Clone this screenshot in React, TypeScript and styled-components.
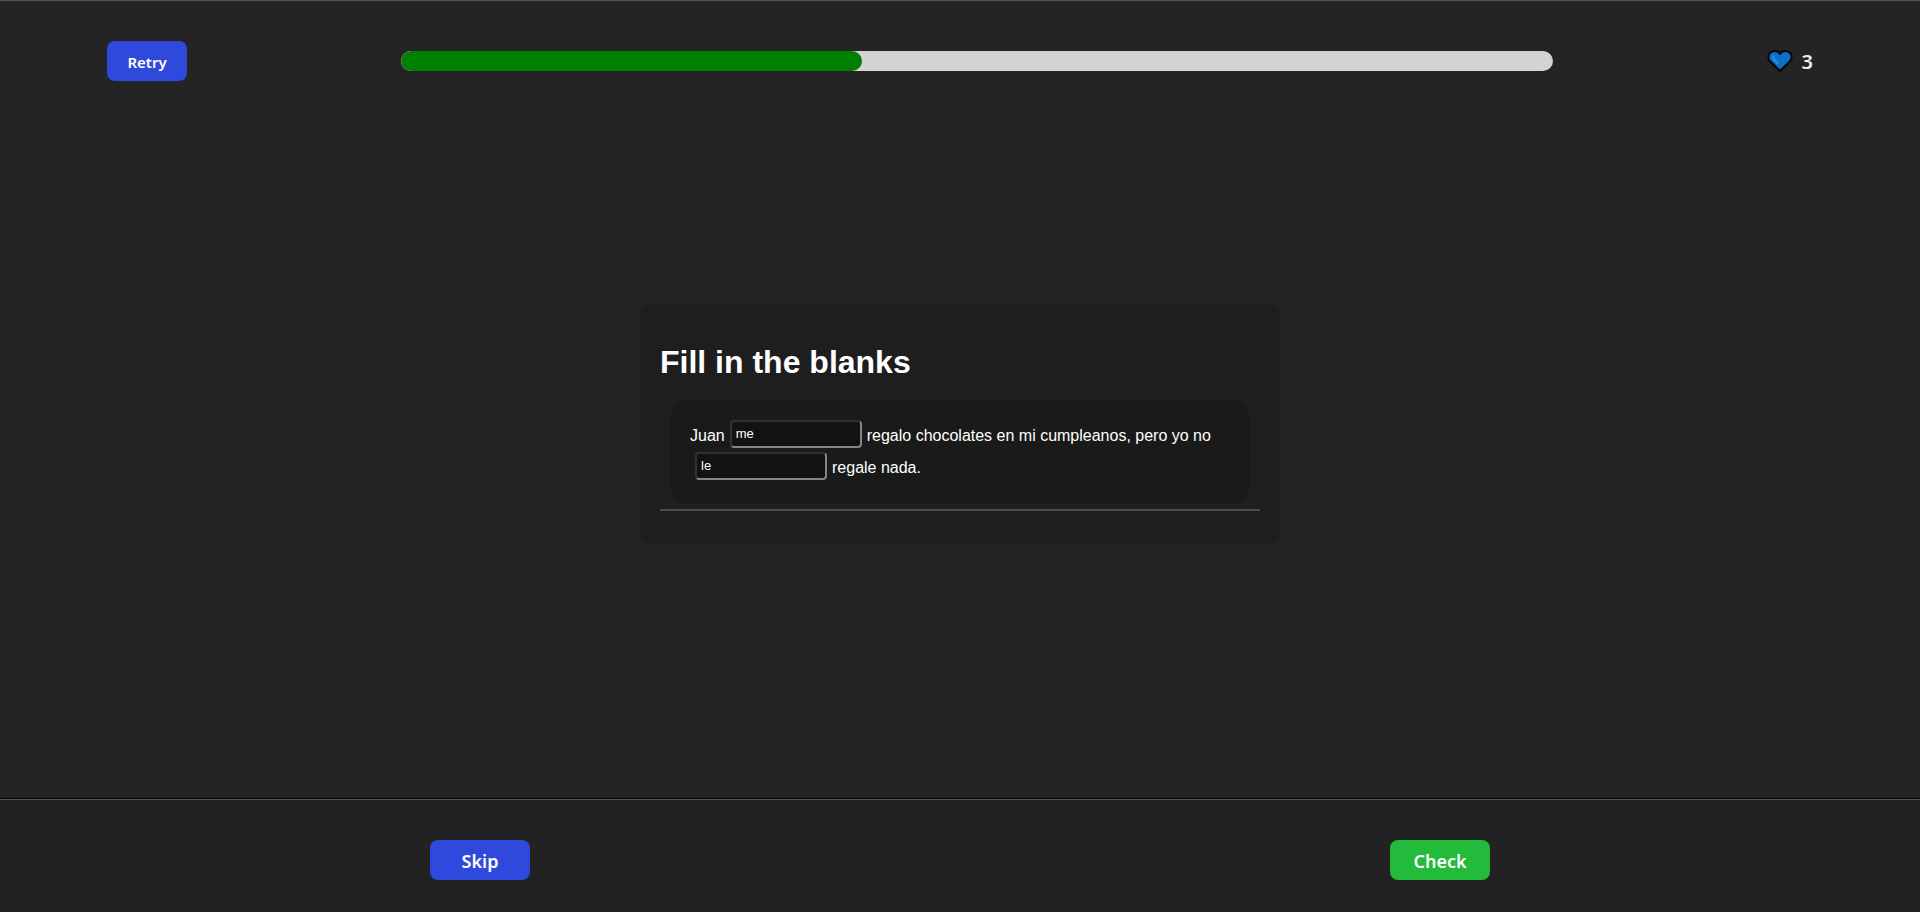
import React, { useState } from "react";
import styled, { createGlobalStyle } from "styled-components";

const GlobalStyle = createGlobalStyle`
  *, *::before, *::after { box-sizing: border-box; }
  body {
    margin: 0;
    background: #242424;
    color: #fff;
    font-family: "Liberation Sans", Arial, sans-serif;
    font-size: 16px;
  }
`;

const Page = styled.div`
  display: flex;
  flex-direction: column;
  min-height: 100vh;
  border-top: 1px solid #555;
`;

const Header = styled.header`
  display: flex;
  align-items: center;
  justify-content: space-around;
  height: 120px;
`;

const Button = styled.button<{ $tone: "blue" | "green"; $large?: boolean }>`
  width: ${(p) => (p.$large ? 100 : 80)}px;
  height: 40px;
  padding: 1px 0 0;
  border: 0;
  border-radius: 8px;
  background: ${(p) => (p.$tone === "blue" ? "#2f49dc" : "#22bb3b")};
  color: #fff;
  font-family: "Noto Sans", sans-serif;
  font-size: ${(p) => (p.$large ? 18 : 15)}px;
  font-weight: 600;
  cursor: pointer;
`;

const Track = styled.div`
  width: 60%;
  height: 20px;
  border-radius: 10px;
  background: #d3d3d3;
  overflow: hidden;
`;

const Fill = styled.div`
  height: 100%;
  border-radius: 10px;
  background: #008000;
`;

const Lives = styled.div`
  display: flex;
  align-items: center;
  gap: 8px;
  color: #eee;
  font-family: "Noto Sans", sans-serif;
  font-size: 20px;
  font-weight: 600;
`;

const Main = styled.main`
  flex: 1;
  display: flex;
  align-items: center;
  justify-content: center;
  padding: 0 20px 74px;
`;

const Card = styled.section`
  width: 100%;
  max-width: 640px;
  padding: 20px;
  border-radius: 10px;
  background: #1e1e1e;
  box-shadow: 0 2px 6px rgba(0, 0, 0, 0.1);
`;

const Title = styled.h1`
  margin: 20px 0;
  font-size: 32px;
  line-height: 36px;
`;

const Sentence = styled.p`
  margin: 0 10px 5px;
  padding: 20px;
  border-radius: 20px;
  background: #1a1a1a;
  line-height: 32px;
`;

const Blank = styled.input`
  width: 132px;
  height: 28px;
  margin: 0 5px;
  padding: 0 4px;
  vertical-align: top;
  border: 2px solid;
  border-color: #323232 #858585 #858585 #323232;
  border-radius: 4px;
  background: #121212;
  color: #fff;
  font-family: inherit;
  font-size: 13px;
`;

const Rule = styled.hr`
  height: 2px;
  margin: 0 0 12px;
  border: 0;
  background: #4c4c4c;
`;

const Footer = styled.footer`
  display: flex;
  justify-content: space-around;
  padding: 40px 0 32px;
  border-top: 1px solid #555;
  background: #222;
  box-shadow: 0 -1px 0 #000;
`;

function Heart() {
  return (
    <svg width="26" height="24" viewBox="0 0 26 24" aria-hidden="true">
      <path
        d="M13 22 2.8 12C1.1 10.2 1 6.6 2.4 4.6 4.8 1.2 10.6 1 13 4.9 15.4 1 21.2 1.2 23.6 4.6c1.4 2 1.3 5.6-.4 7.4Z"
        fill="#0a70c8"
        stroke="#080808"
        strokeWidth="2"
        strokeLinejoin="round"
      />
      <path
        d="M5.8 7.4c.4 2.8 2.2 4.8 4.6 6.6"
        fill="none"
        stroke="#3a8dd2"
        strokeWidth="2"
        strokeLinecap="round"
      />
    </svg>
  );
}

export default function App() {
  const [first, setFirst] = useState("me");
  const [second, setSecond] = useState("le");
  const progress = 40;

  return (
    <>
      <GlobalStyle />
      <Page>
        <Header>
          <Button type="button" $tone="blue">Retry</Button>
          <Track role="progressbar" aria-label="Progress" aria-valuenow={progress} aria-valuemin={0} aria-valuemax={100}>
            <Fill style={{ width: `${progress}%` }} />
          </Track>
          <Lives>
            <Heart />
            <span>3</span>
          </Lives>
        </Header>
        <Main>
          <Card>
            <Title>Fill in the blanks</Title>
            <Sentence>
              Juan
              <Blank aria-label="First blank" value={first} onChange={(e) => setFirst(e.target.value)} />
              regalo chocolates en mi cumpleanos, pero yo no
              <Blank aria-label="Second blank" value={second} onChange={(e) => setSecond(e.target.value)} />
              regale nada.
            </Sentence>
            <Rule />
          </Card>
        </Main>
        <Footer>
          <Button type="button" $tone="blue" $large>Skip</Button>
          <Button type="button" $tone="green" $large>Check</Button>
        </Footer>
      </Page>
    </>
  );
}
